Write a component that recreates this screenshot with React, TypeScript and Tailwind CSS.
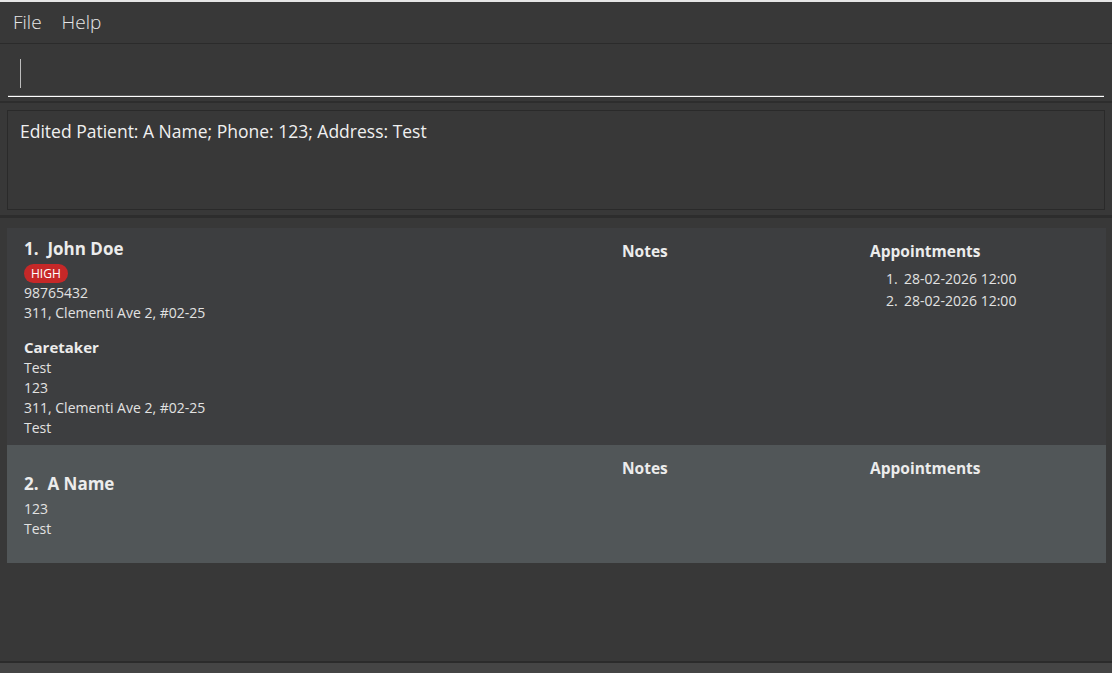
import React from 'react';

const font = "font-['Segoe_UI','Open_Sans','Noto_Sans',sans-serif]";

type Patient = {
  index: number;
  name: string;
  tag?: string;
  phone: string;
  address: string;
  caretaker?: string[];
  appointments: string[];
};

const patients: Patient[] = [
  {
    index: 1,
    name: 'John Doe',
    tag: 'HIGH',
    phone: '98765432',
    address: '311, Clementi Ave 2, #02-25',
    caretaker: ['Test', '123', '311, Clementi Ave 2, #02-25', 'Test'],
    appointments: ['28-02-2026 12:00', '28-02-2026 12:00'],
  },
  {
    index: 2,
    name: 'A Name',
    phone: '123',
    address: 'Test',
    appointments: [],
  },
];

function PatientCard({ p, odd }: { p: Patient; odd: boolean }) {
  return (
    <div className={`flex ${odd ? 'bg-[#3d3e40]' : 'bg-[#515658]'}`}>
      {/* left: details */}
      <div
        className={`w-[615px] pl-[17px] flex flex-col justify-center ${
          p.caretaker ? 'pt-[10px] pb-[7px]' : 'pt-[28px] pb-[24px]'
        }`}
      >
        <div className="h-[22px] leading-[22px] text-[17px] font-bold text-[#ececec]">
          {p.index}.&nbsp;&nbsp;{p.name}
        </div>
        {p.tag && (
          <div className="mt-[4px] flex">
            <span className="h-[19px] px-[7px] rounded-full bg-[#c62828] text-white text-[12px] leading-[19px]">
              {p.tag}
            </span>
          </div>
        )}
        <div className={`${p.tag ? '' : 'mt-[4px]'} text-[14px] leading-[20px] text-[#e2e2e2]`}>
          <div>{p.phone}</div>
          <div>{p.address}</div>
        </div>
        {p.caretaker && (
          <>
            <div className="mt-[13px] h-[22px] leading-[22px] text-[15px] font-bold text-[#ececec]">
              Caretaker
            </div>
            <div className="text-[14px] leading-[20px] text-[#e2e2e2]">
              {p.caretaker.map((c, i) => (
                <div key={i}>{c}</div>
              ))}
            </div>
          </>
        )}
      </div>

      {/* notes */}
      <div className="w-[248px] pt-[12px]">
        <div className="h-[22px] leading-[22px] text-[15.5px] font-bold text-[#ececec]">Notes</div>
      </div>

      {/* appointments */}
      <div className="flex-1 pt-[12px]">
        <div className="h-[22px] leading-[22px] text-[15.5px] font-bold text-[#ececec]">Appointments</div>
        {p.appointments.length > 0 && (
          <div className="mt-[6px] pl-[16px] text-[14px] leading-[22px] text-[#e2e2e2]">
            {p.appointments.map((a, i) => (
              <div key={i} className="flex">
                <span className="w-[18px]">{i + 1}.</span>
                <span>{a}</span>
              </div>
            ))}
          </div>
        )}
      </div>
    </div>
  );
}

export default function App() {
  return (
    <div className={`w-[1112px] h-[673px] bg-[#383838] flex flex-col overflow-hidden ${font}`}>
      <div className="h-[2px] bg-[#e6e6e6]" />

      {/* menu bar */}
      <div className="h-[41px] flex items-center gap-[20px] pl-[13px] text-[19px] font-light text-[#e6e6e6]">
        <span>File</span>
        <span>Help</span>
      </div>
      <div className="h-px bg-[#2b2b2b]" />

      {/* command box */}
      <div className="h-[57px] px-[8px] pt-[14px]">
        <div className="h-[37px] pl-[12px] pt-px">
          <div className="w-px h-[29px] bg-[#bdbdbd]" />
        </div>
        <div className="h-px bg-[#5a5a5a]" />
        <div className="h-px bg-white" />
      </div>
      <div className="h-[2px] bg-[#2d2d2d]" />

      {/* result display */}
      <div className="px-[7px] pt-[7px] pb-[5px]">
        <div className="h-[100px] border border-[#2a2a2a] px-[12px] pt-[7px] text-[17.5px] text-[#f0f0f0]">
          Edited Patient: A Name; Phone: 123; Address: Test
        </div>
      </div>
      <div className="h-[3px] bg-[#2d2d2d]" />

      {/* patient list */}
      <div className="flex-1 pl-[7px] pr-[6px] pt-[10px]">
        {patients.map((p, i) => (
          <PatientCard key={p.index} p={p} odd={i % 2 === 0} />
        ))}
      </div>

      <div className="h-[2px] bg-[#2b2b2b]" />
      <div className="h-[10px] bg-[#454545]" />
    </div>
  );
}
